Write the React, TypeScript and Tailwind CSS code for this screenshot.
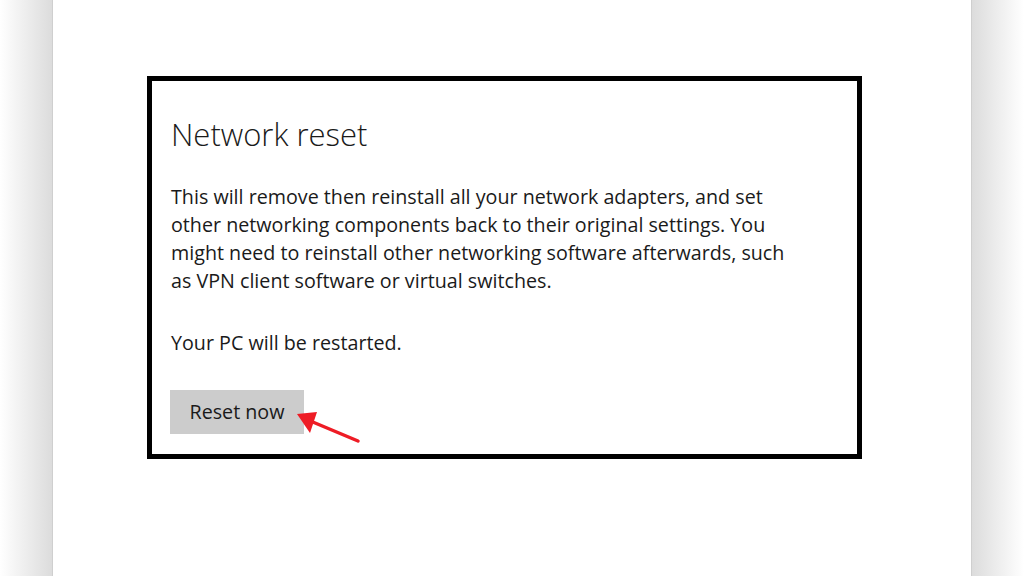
import React from 'react'

function Arrow() {
  return (
    <svg className="absolute left-[290px] top-[404px]" width="76" height="44" viewBox="0 0 76 44">
      <line x1="68" y1="37" x2="18" y2="16" stroke="#ee1c25" strokeWidth="3.5" strokeLinecap="round" />
      <polygon points="7,10 27,8 20,29" fill="#ee1c25" />
    </svg>
  )
}

export default function App() {
  return (
    <div className="relative flex h-[576px] w-[1024px] overflow-hidden bg-white" style={{ fontFamily: '"Open Sans", "Noto Sans", sans-serif' }}>
      <div className="w-[52px] shrink-0 bg-gradient-to-r from-white to-[#dcdcdc]" />
      <div className="flex-1 border-x border-[#cfcfcf] bg-white">
        <div className="ml-[94px] mt-[76px] h-[383px] w-[715px] border-[5px] border-black pl-[18px] pt-[35px] text-[#1a1a1a]">
          <h1 className="pl-[1px] text-[31px] font-light leading-[36px]">Network reset</h1>
          <p className="mt-[31px] w-[628px] pl-[1px] text-[19.7px] leading-[28px]">
            This will remove then reinstall all your network adapters, and set other networking components back to their original settings. You might need to reinstall other networking software afterwards, such as VPN client software or virtual switches.
          </p>
          <p className="mt-[34px] pl-[1px] text-[19.7px] leading-[28px]">Your PC will be restarted.</p>
          <button className="mt-[33px] h-[44px] w-[134px] bg-[#cccccc] text-[19.7px] text-[#1a1a1a]">Reset now</button>
        </div>
      </div>
      <div className="w-[52px] shrink-0 bg-gradient-to-l from-white to-[#dcdcdc]" />
      <Arrow />
    </div>
  )
}
